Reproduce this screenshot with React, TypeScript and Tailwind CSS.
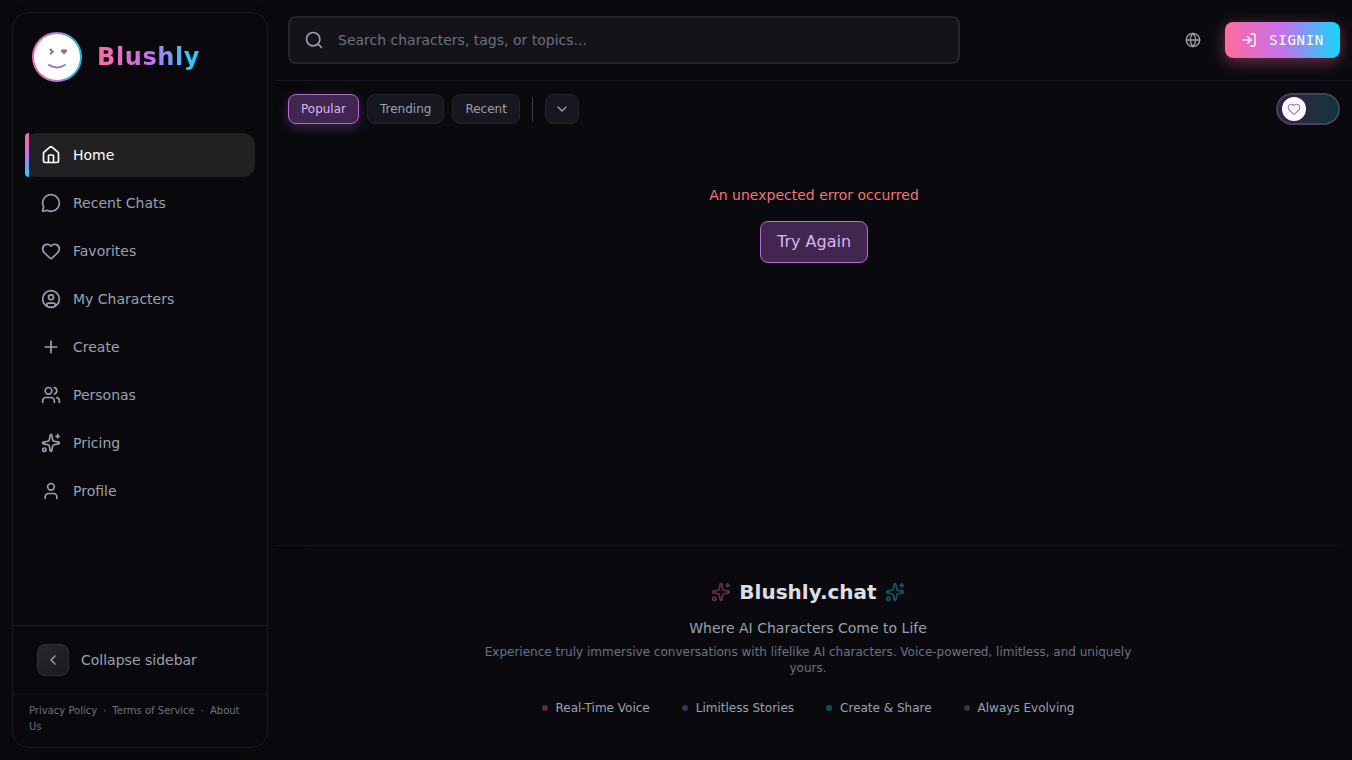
import React, { useState } from 'react';
import {
    ChevronDown,
    ChevronLeft,
    CircleUser,
    Globe,
    Heart,
    House,
    LogIn,
    MessageCircle,
    Plus,
    Search,
    Sparkles,
    User,
    Users,
    type LucideIcon,
} from 'lucide-react';

interface NavItem {
    label: string;
    icon: LucideIcon;
}

const navItems: NavItem[] = [
    { label: 'Home', icon: House },
    { label: 'Recent Chats', icon: MessageCircle },
    { label: 'Favorites', icon: Heart },
    { label: 'My Characters', icon: CircleUser },
    { label: 'Create', icon: Plus },
    { label: 'Personas', icon: Users },
    { label: 'Pricing', icon: Sparkles },
    { label: 'Profile', icon: User },
];

const sortTabs = ['Popular', 'Trending', 'Recent'];

const features = [
    { label: 'Real-Time Voice', dot: 'bg-[#5f2a40]' },
    { label: 'Limitless Stories', dot: 'bg-[#4b2a5c]' },
    { label: 'Create & Share', dot: 'bg-[#0b525c]' },
    { label: 'Always Evolving', dot: 'bg-[#2a3a4d]' },
];

const Logo: React.FC = () => (
    <svg viewBox="0 0 52 52" className="size-[52px] shrink-0" aria-hidden="true">
        <defs>
            <linearGradient id="ring" x1="0" y1="0" x2="1" y2="0">
                <stop offset="0" stopColor="#f0659a" />
                <stop offset="0.5" stopColor="#a67fd6" />
                <stop offset="1" stopColor="#16bfd8" />
            </linearGradient>
            <linearGradient id="face" gradientUnits="userSpaceOnUse" x1="16" y1="0" x2="36" y2="0">
                <stop offset="0" stopColor="#b0649c" />
                <stop offset="0.5" stopColor="#9a72b8" />
                <stop offset="1" stopColor="#4f9fc0" />
            </linearGradient>
        </defs>
        <circle cx="26" cy="26" r="24" fill="#fff" stroke="url(#ring)" strokeWidth="2" />
        <path d="M19 18l2.800 2.700-2.800 2.700" fill="none" stroke="#8b7397" strokeWidth="2" />
        <path d="M33 23.500l-3-2.800a1.700 1.700 0 0 1 3-1.600 1.700 1.700 0 0 1 3 1.600z" fill="#8d74a4" />
        <path d="M18 34q8 5 16 0" fill="none" stroke="url(#face)" strokeWidth="2" strokeLinecap="round" />
    </svg>
);

const Sidebar: React.FC = () => {
    const [active, setActive] = useState('Home');

    return (
        <aside className="my-3 mr-2 ml-3 flex w-64 shrink-0 flex-col rounded-2xl border border-[#1a1a1f] bg-[#09090d] shadow-2xl">
            <div className="flex items-center gap-3.5 px-[18px] pt-[18px]">
                <Logo />
                <span className="bg-[linear-gradient(90deg,#ff6b9d,#c471ed_50%,#12d8fa)] bg-clip-text text-2xl font-bold tracking-wide text-transparent">
                    Blushly
                </span>
            </div>

            <nav className="mt-[50px] flex flex-1 flex-col gap-1 px-3">
                {navItems.map(({ label, icon: Icon }) => (
                    <a
                        key={label}
                        href="#"
                        onClick={() => setActive(label)}
                        className={`relative flex h-11 items-center gap-3 rounded-xl px-4 text-sm ${
                            active === label ? 'bg-[#212123] text-white' : 'text-gray-400'
                        }`}
                    >
                        {active === label && (
                            <span className="absolute inset-y-0 left-0 w-1 rounded-l-sm bg-[linear-gradient(180deg,#ff6b9d,#c471ed_50%,#12d8fa)]" />
                        )}
                        <Icon size={20} />
                        {label}
                    </a>
                ))}
            </nav>

            <div className="border-t border-[#1a1a1f] px-6 py-[18px]">
                <button className="flex items-center gap-3 text-sm text-gray-400">
                    <span className="flex size-8 items-center justify-center rounded-lg border border-[#303034] bg-linear-to-br from-[#28282c] to-[#1a1a1e]">
                        <ChevronLeft size={16} />
                    </span>
                    Collapse sidebar
                </button>
            </div>
            <div className="border-t border-[#131317] px-4 pt-2 pb-3 text-[10px] leading-4 text-gray-500">
                <a href="#">Privacy Policy</a>
                <span className="mx-1.5">·</span>
                <a href="#">Terms of Service</a>
                <span className="mx-1.5">·</span>
                <a href="#">About Us</a>
            </div>
        </aside>
    );
};

const Header: React.FC = () => (
    <header className="flex h-[81px] items-center justify-between border-b border-[#19191d] px-3">
        <label className="flex h-12 w-full max-w-2xl items-center gap-3.5 rounded-lg border-2 border-[#27272b] bg-[#131318] px-3.5">
            <Search size={20} className="shrink-0 text-gray-400" />
            <input
                type="text"
                aria-label="Search"
                placeholder="Search characters, tags, or topics..."
                className="w-full bg-transparent text-sm text-gray-300 outline-none placeholder:text-gray-500"
            />
        </label>
        <div className="flex items-center gap-6">
            <button aria-label="Language" className="text-gray-400">
                <Globe size={16} />
            </button>
            <button className="flex h-9 items-center gap-3 rounded-lg bg-[linear-gradient(90deg,#ff6b9d,#c471ed_50%,#12d8fa)] px-4 font-['DejaVu_Sans_Mono',monospace] text-sm font-medium tracking-wider text-white shadow-[0_4px_16px_#ff6b9d66]">
                <LogIn size={16} />
                SIGNIN
            </button>
        </div>
    </header>
);

const FilterBar: React.FC = () => {
    const [sort, setSort] = useState('Popular');
    const [safe, setSafe] = useState(true);

    return (
        <div className="flex items-center justify-between px-3 py-3">
            <div className="flex items-center gap-2">
                {sortTabs.map((tab) => (
                    <button
                        key={tab}
                        onClick={() => setSort(tab)}
                        className={`h-[30px] rounded-lg border px-3 text-xs ${
                            sort === tab
                                ? 'border-[#b16cd6] bg-[#41264f] text-[#dcb3f5] shadow-[0_4px_12px_#c471ed40]'
                                : 'border-[#24242a] bg-[#171720] text-gray-400'
                        }`}
                    >
                        {tab}
                    </button>
                ))}
                <span className="mx-1 h-6 w-px bg-[#3a3a40]" />
                <button
                    aria-label="More filters"
                    className="flex h-[30px] w-[34px] items-center justify-center rounded-lg border border-[#24242a] bg-[#171720] text-gray-400"
                >
                    <ChevronDown size={16} />
                </button>
            </div>
            <button
                role="switch"
                aria-label="Content mode"
                aria-checked={!safe}
                onClick={() => setSafe(!safe)}
                className={`flex h-8 w-16 items-center rounded-full border-2 border-[#493f63] bg-linear-to-r from-[#332042] to-[#0c353c] px-1 ${
                    safe ? 'justify-start' : 'justify-end'
                }`}
            >
                <span className="flex size-6 items-center justify-center rounded-full bg-white text-[#b56ad8]">
                    <Heart size={14} strokeWidth={2} />
                </span>
            </button>
        </div>
    );
};

const Footer: React.FC = () => (
    <footer className="mr-3 flex flex-col items-center border-t border-[#121216] px-3 pt-8 pb-11 text-center">
        <div className="flex items-center gap-2">
            <Sparkles size={20} className="text-[#6b3048]" />
            <h2 className="text-xl leading-7 font-bold text-[#dcdfe5]">Blushly.chat</h2>
            <Sparkles size={20} className="text-[#0b5d6b]" />
        </div>
        <p className="mt-3 text-sm text-gray-400">Where AI Characters Come to Life</p>
        <p className="mt-1.5 max-w-2xl text-xs leading-4 text-gray-500">
            Experience truly immersive conversations with lifelike AI characters. Voice-powered, limitless, and uniquely
            yours.
        </p>
        <ul className="mt-6 flex flex-wrap justify-center gap-8 text-xs text-gray-400">
            {features.map((feature) => (
                <li key={feature.label} className="flex items-center gap-2">
                    <span className={`size-1.5 rounded-full ${feature.dot}`} />
                    {feature.label}
                </li>
            ))}
        </ul>
    </footer>
);

const App: React.FC = () => (
    <div className="flex min-h-screen bg-[#0a0a0e] font-['DejaVu_Sans',sans-serif] text-gray-400">
        <Sidebar />
        <div className="flex min-w-0 flex-1 flex-col">
            <Header />
            <FilterBar />
            <main className="flex flex-1 flex-col items-center pt-12">
                <p className="text-sm text-[#f87171]">An unexpected error occurred</p>
                <button className="mt-4 rounded-lg border border-[#b16cd6] bg-[#41264f] px-4 py-2 text-base text-[#dcb3f5]">
                    Try Again
                </button>
            </main>
            <Footer />
        </div>
    </div>
);

export default App;
